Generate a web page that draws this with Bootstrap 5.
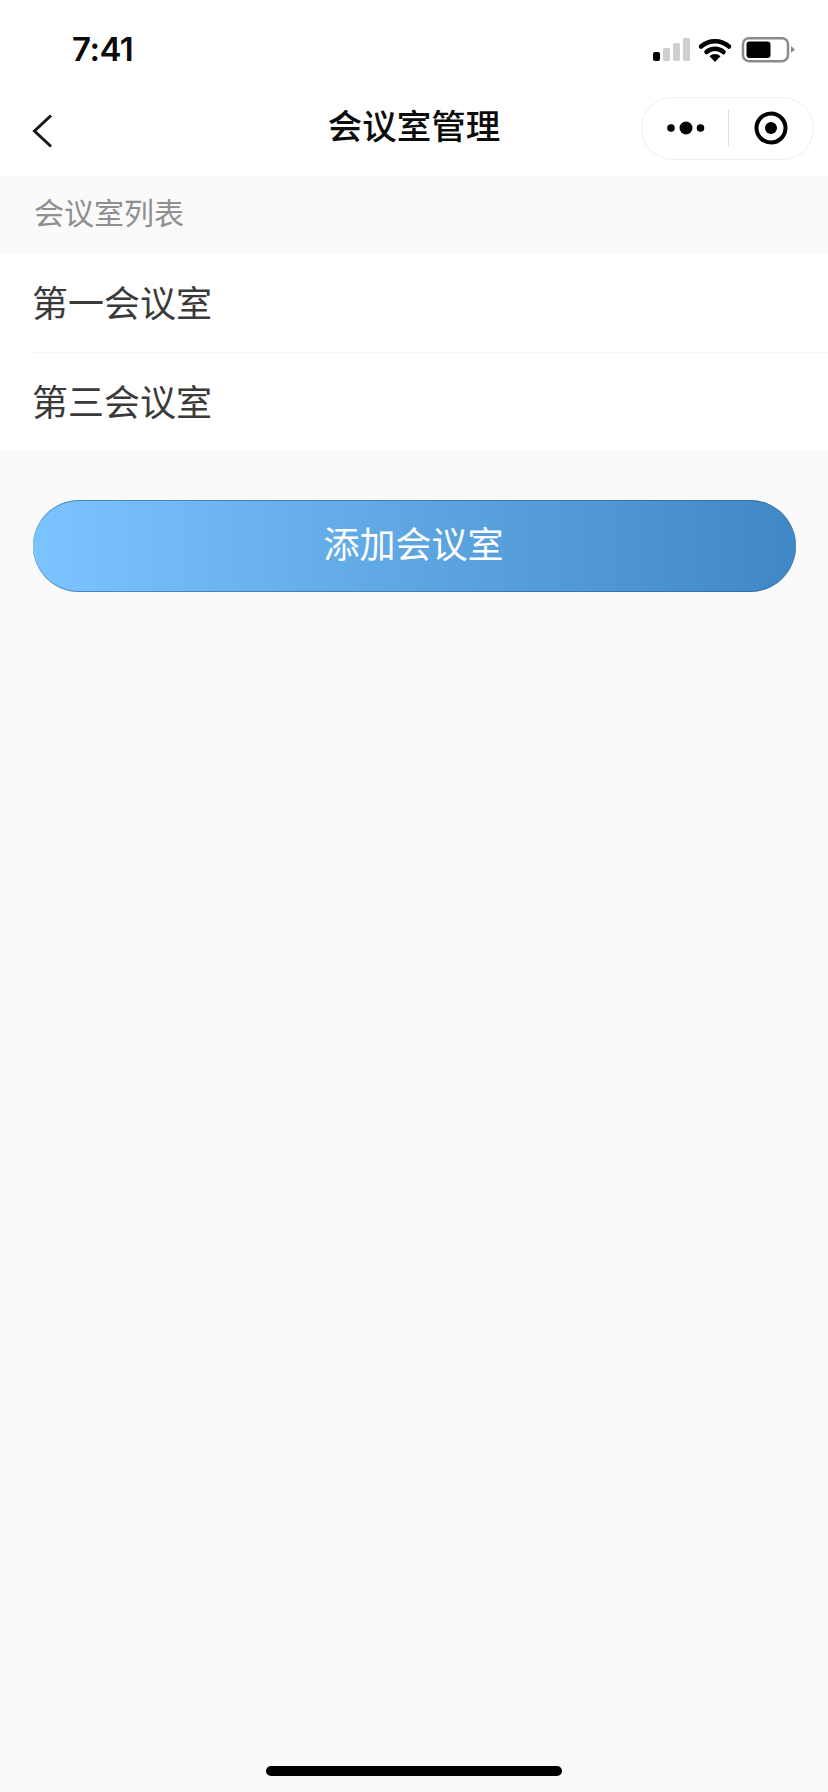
<!DOCTYPE html>
<html lang="zh-CN">
<head>
    <meta charset="UTF-8">
    <meta name="viewport" content="width=device-width, initial-scale=1.0">
    <title>会议室管理</title>
    <link rel="stylesheet" href="https://cdn.jsdelivr.net/npm/bootstrap@5.3.0/dist/css/bootstrap.min.css">
    <style>
        body {
            background-color: #fafafa;
            font-family: "Liberation Sans", "Noto Sans CJK SC", sans-serif;
        }
        .page-wrap {
            height: 1792px;
        }
        .status-row {
            height: 78px;
            padding: 21px 32px 0 72px;
        }
        .clock {
            font-family: Inter, "Liberation Sans", sans-serif;
            font-size: 33px;
            font-weight: 600;
            color: #0a0a0a;
            letter-spacing: -0.5px;
            line-height: 1;
        }
        .title-row {
            height: 98px;
            padding: 0 14px 0 32px;
        }
        .back-btn {
            width: 21px;
            height: 34px;
            margin-top: 8px;
        }
        .page-title {
            left: 0;
            right: 0;
            top: 50%;
            transform: translateY(-50%);
            font-size: 34.500px;
            font-weight: 500;
            color: #0c0c0c;
            line-height: 1.2;
            text-align: center;
            margin-top: 1px;
        }
        .capsule {
            width: 173px;
            height: 63px;
            margin-top: 2px;
            border: 1px solid #efefef;
            border-radius: 32px;
            z-index: 1;
        }
        .capsule-part {
            width: 86px;
        }
        .capsule-part:first-child {
            width: 87px;
        }
        .capsule-line {
            width: 1px;
            height: 37px;
            background-color: #dedede;
        }
        .section-label {
            height: 78px;
            padding-left: 34px;
            padding-bottom: 3px;
            font-size: 30px;
            color: #8f8f8f;
        }
        .room-list {
            background-color: #fff;
        }
        .room-row {
            height: 99px;
            margin-left: 32px;
            padding-top: 3px;
            font-size: 36px;
            color: #3a3a3a;
            border-bottom: 1px solid #f6f6f6;
        }
        .room-row:last-child {
            margin-left: 0;
            padding-left: 32px;
            height: 99px;
        }
        .add-wrap {
            padding: 48px 32px 0 33px;
        }
        .add-btn {
            height: 92px;
            padding-right: 14px;
            font-size: 36px;
            border: 0;
            border-radius: 46px;
            color: #fff;
            background: linear-gradient(90deg, #7cc4ff 0%, #3f88c5 100%);
            box-shadow: inset 0 1px 0 rgba(40, 90, 140, .55), inset 0 -1px 0 rgba(40, 90, 140, .55);
        }
        .home-bar {
            width: 296px;
            height: 10px;
            margin-bottom: 16px;
            border-radius: 5px;
            background-color: #000;
        }
    </style>
</head>
<body>
    <div class="page-wrap d-flex flex-column">
        <div class="bg-white">
            <div class="status-row d-flex align-items-center justify-content-between">
                <span class="clock">7:41</span>
                <svg width="143" height="26" viewBox="0 0 143 26">
                    <rect x="0" y="15" width="7" height="9" rx="2" fill="#000"/>
                    <rect x="10" y="11" width="7" height="13" rx="1.5" fill="#cfcfcf"/>
                    <rect x="20" y="6" width="7" height="18" rx="1.5" fill="#cfcfcf"/>
                    <rect x="30" y="1" width="7" height="23" rx="1.5" fill="#cfcfcf"/>
                    <path d="M48 9.500a21 21 0 0 1 28 0" fill="none" stroke="#000" stroke-width="4.500" stroke-linecap="round"/>
                    <path d="M53.500 15a13 13 0 0 1 17 0" fill="none" stroke="#000" stroke-width="4.500" stroke-linecap="round"/>
                    <path d="M56.500 19.300a8 8 0 0 1 11 0L62 25z" fill="#000"/>
                    <rect x="90" y="1.200" width="45" height="23" rx="6" fill="none" stroke="#8a8a8a" stroke-width="2.500"/>
                    <rect x="93.500" y="4.500" width="24" height="16.500" rx="3" fill="#000"/>
                    <path d="M138 9l4 3.500-4 3.500z" fill="#8a8a8a"/>
                </svg>
            </div>
            <div class="title-row position-relative d-flex align-items-center justify-content-between">
                <svg class="back-btn" viewBox="0 0 21 34">
                    <path d="M19 1.500L2.500 17 19 32.500" fill="none" stroke="#1a1a1a" stroke-width="3"/>
                </svg>
                <div class="page-title position-absolute">会议室管理</div>
                <div class="capsule d-flex align-items-center bg-white position-relative">
                    <div class="capsule-part d-flex justify-content-center">
                        <svg width="46" height="14" viewBox="0 0 46 14">
                            <circle cx="9" cy="7" r="3.800" fill="#000"/>
                            <circle cx="24" cy="7" r="6.500" fill="#000"/>
                            <circle cx="38.500" cy="7" r="3.800" fill="#000"/>
                        </svg>
                    </div>
                    <div class="capsule-line"></div>
                    <div class="capsule-part d-flex justify-content-center">
                        <svg width="34" height="34" viewBox="0 0 34 34">
                            <circle cx="17" cy="17" r="14.500" fill="none" stroke="#000" stroke-width="4"/>
                            <circle cx="17" cy="17" r="6" fill="#000"/>
                        </svg>
                    </div>
                </div>
            </div>
        </div>
        <div class="section-label d-flex align-items-center">会议室列表</div>
        <div class="room-list">
            <div class="room-row d-flex align-items-center">第一会议室</div>
            <div class="room-row d-flex align-items-center">第三会议室</div>
        </div>
        <div class="add-wrap">
            <button type="button" class="add-btn btn w-100 d-flex align-items-center justify-content-center">添加会议室</button>
        </div>
        <div class="home-bar mt-auto mx-auto"></div>
    </div>
    <script src="https://cdn.jsdelivr.net/npm/bootstrap@5.3.0/dist/js/bootstrap.bundle.min.js"></script>
</body>
</html>
